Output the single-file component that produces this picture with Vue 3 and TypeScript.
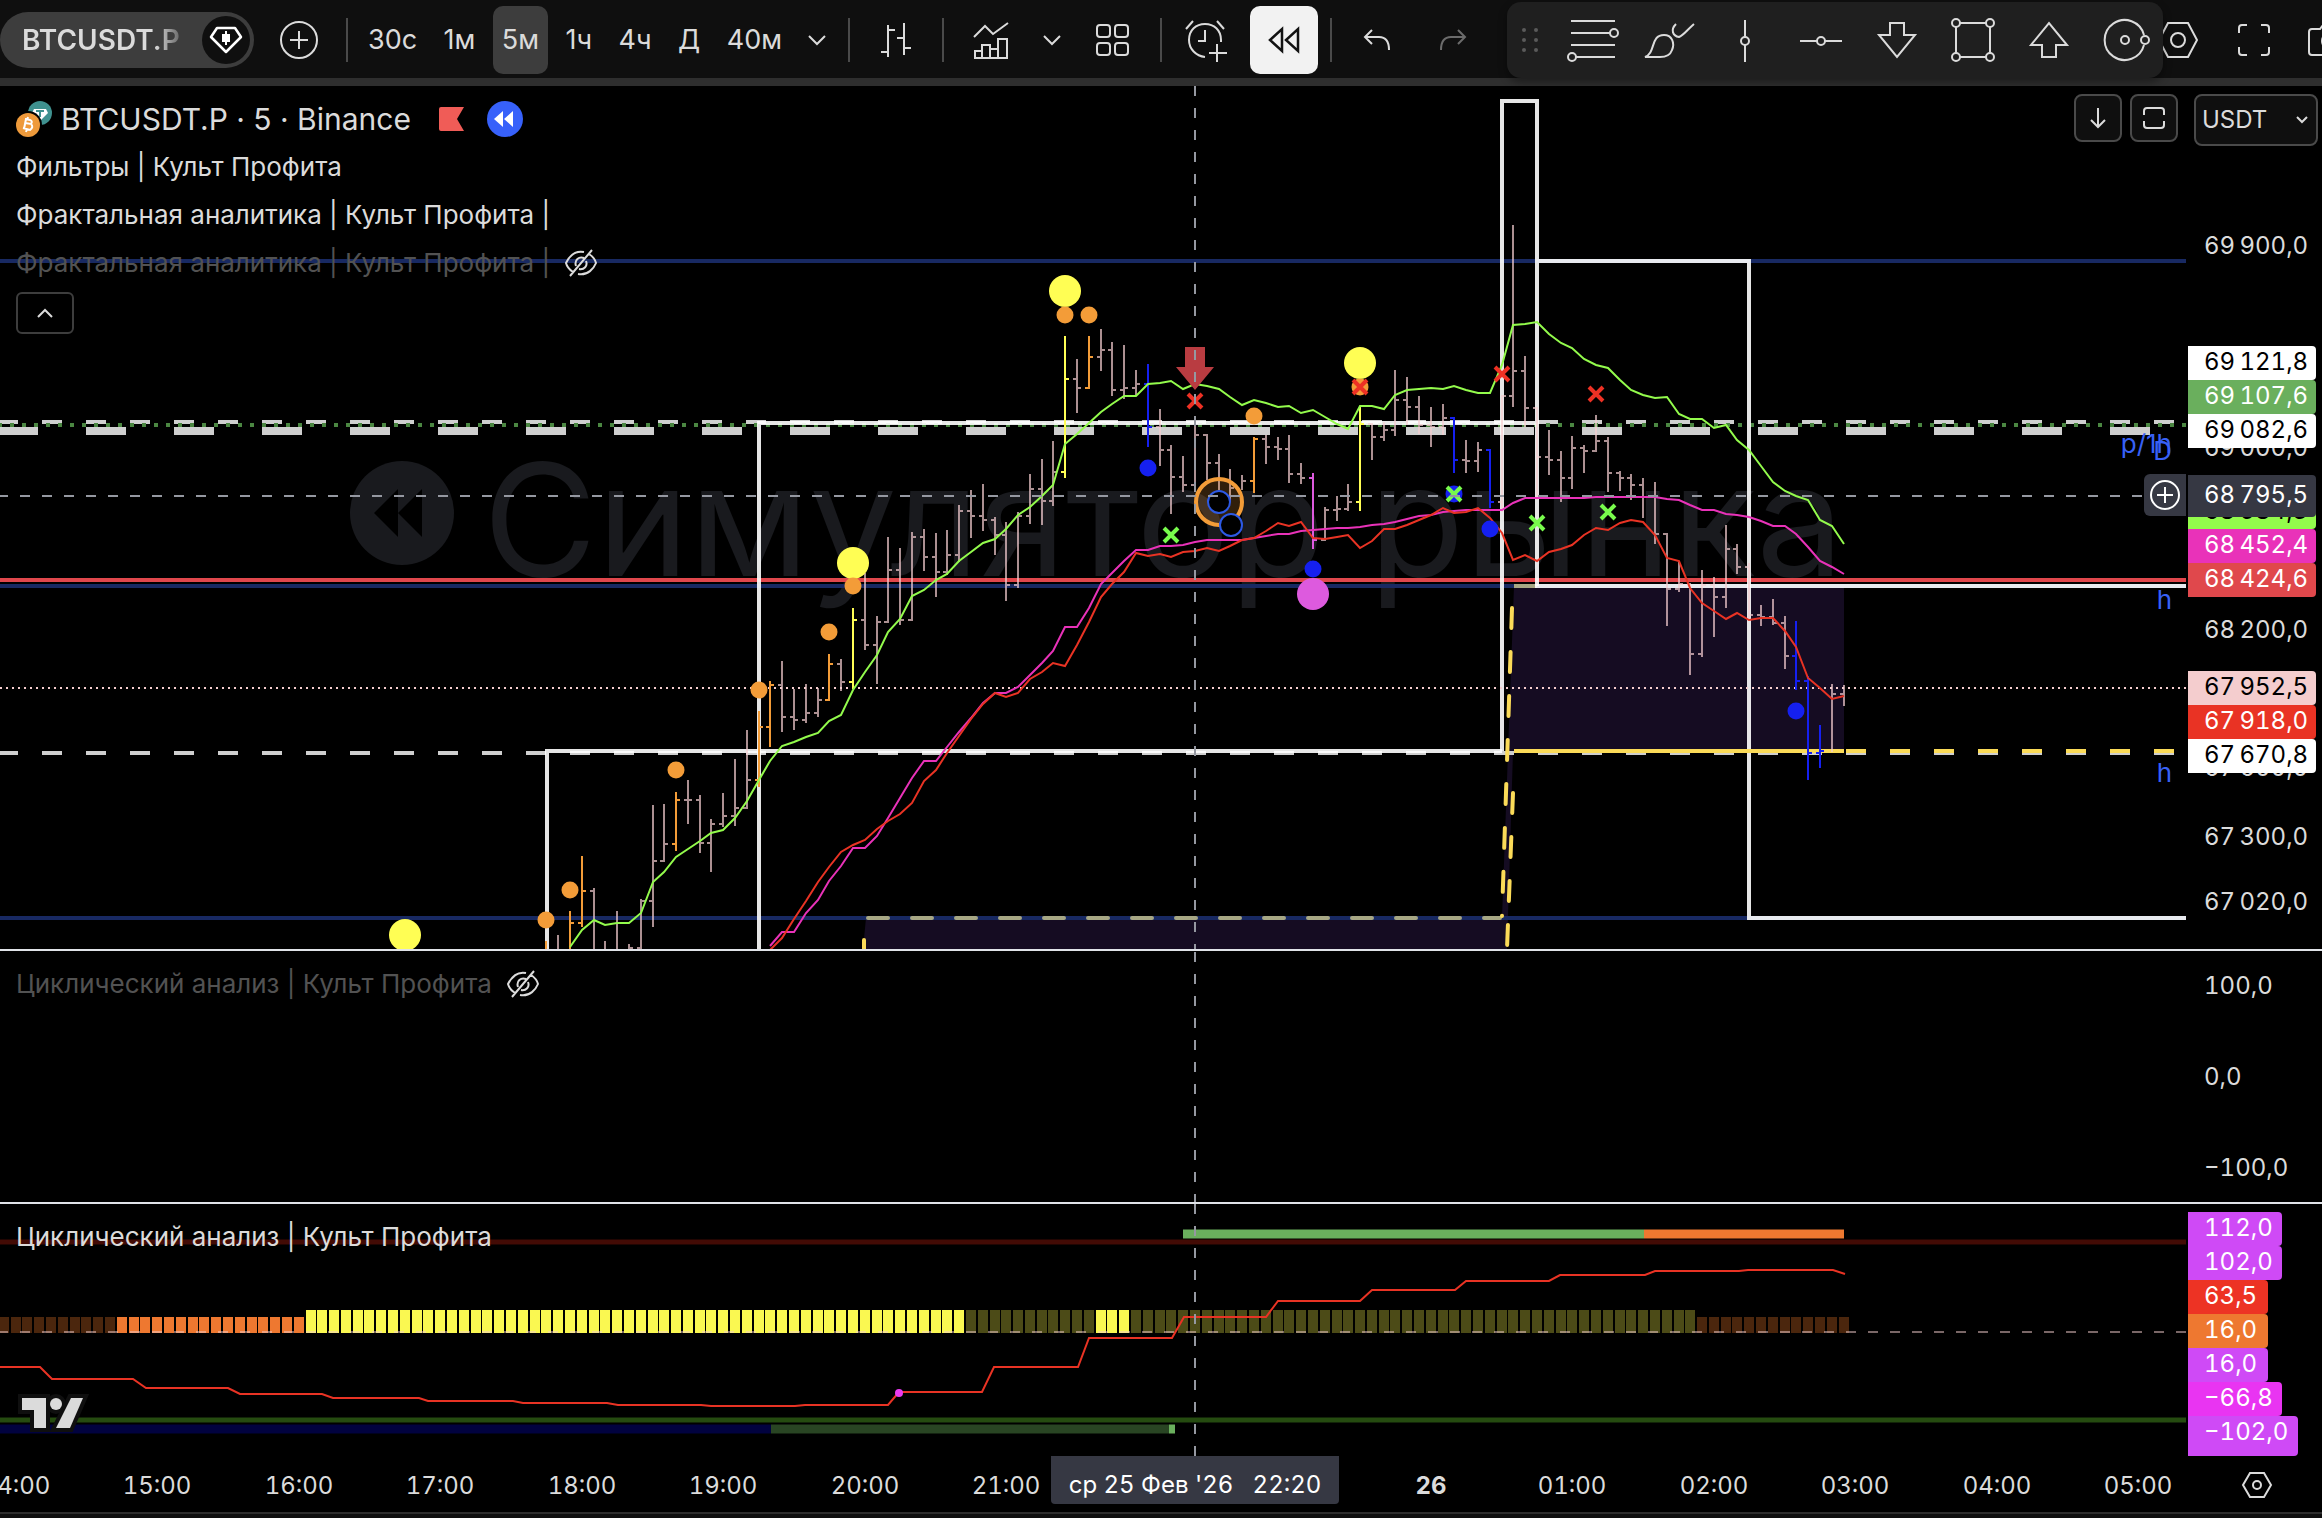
<script setup lang="ts">
import { ref } from 'vue'

interface Tag {
  text: string
  y: number
  bg?: string
  fg?: string
  kind?: string
}

type Bar = [number, number, number, number | null, number | null, string?]
type Point = [number, number]

const currency = ref('USDT')
const activeInterval = ref('5м')
const intervals = ['30с', '1м', '5м', '1ч', '4ч', 'Д', '40м']

// Bars are numbered from the one under the cursor (22:20), five minutes apart.
const CURSOR_X = 1195
const STEP = 11.793
const xOf = (i: number): number => Math.round(CURSOR_X + i * STEP)
const cursorLeft = `${(CURSOR_X / 2186) * 100}%`

// [index, high, low, open, close, colour key]
const bars: Bar[] = [
  [-55, 941, 960, null, null, 'o'], [-54, 935, 960, null, null], [-53, 911, 960, null, 923, 'o'],
  [-52, 856, 927, 923, 891, 'o'], [-51, 888, 960, 891, null], [-50, 941, 960, null, null],
  [-49, 911, 960, null, null], [-48, 944, 960, null, 948], [-47, 899, 960, 948, 901],
  [-46, 805, 927, 901, 861], [-45, 804, 862, 861, 844], [-44, 792, 851, 844, 800, 'o'],
  [-43, 780, 824, 800, 800], [-42, 795, 853, 800, 843], [-41, 819, 872, 843, 824],
  [-40, 793, 827, 824, 816], [-39, 759, 826, 816, 808], [-38, 730, 809, 808, 780],
  [-37, 711, 787, 780, 727, 'o'], [-36, 681, 747, 727, 685, 'o'], [-35, 661, 732, 685, 717],
  [-34, 689, 730, 717, 720], [-33, 684, 723, 720, 713], [-32, 688, 717, 713, 700],
  [-31, 654, 701, 700, 664, 'o'], [-30, 659, 691, 664, 682], [-29, 608, 689, 682, 620, 'y'],
  [-28, 573, 650, 620, 645], [-27, 616, 684, 645, 622], [-26, 537, 623, 622, 570],
  [-25, 548, 625, 570, 620], [-24, 532, 621, 620, 537], [-23, 529, 571, 537, 557],
  [-22, 533, 597, 557, 572], [-21, 530, 575, 572, 555], [-20, 505, 562, 555, 511],
  [-19, 490, 538, 511, 516], [-18, 484, 531, 516, 520], [-17, 517, 555, 520, 535],
  [-16, 522, 601, 535, 585], [-15, 512, 588, 585, 516], [-14, 474, 524, 516, 489],
  [-13, 459, 525, 489, 501], [-12, 441, 506, 501, 472], [-11, 336, 478, 472, 379, 'y'],
  [-10, 359, 413, 379, 388], [-9, 336, 389, 388, 357, 'o'], [-8, 329, 371, 357, 350],
  [-7, 342, 396, 350, 390], [-6, 345, 399, 390, 388], [-5, 370, 396, 388, 384],
  [-4, 364, 447, 384, 427, 'b'], [-3, 409, 466, 427, 450], [-2, 445, 514, 450, 477],
  [-1, 456, 492, 477, 485], [0, 418, 490, 485, 435], [1, 434, 480, 435, 463],
  [2, 454, 490, 463, null], [3, 469, 502, null, 488], [4, 475, 490, null, 481],
  [5, 437, 493, 481, 439, 'o'], [6, 435, 464, 439, 447], [7, 437, 460, 447, 449],
  [8, 435, 483, 449, 474], [9, 463, 484, 474, 478], [10, 473, 549, 478, 540, 'm'],
  [11, 507, 541, 540, 510], [12, 496, 521, 510, 509], [13, 484, 511, 509, 502],
  [14, 406, 511, 502, 424, 'y'], [15, 423, 460, 424, 437], [16, 422, 441, 437, 430],
  [17, 370, 436, 430, 400], [18, 377, 425, 400, 407], [19, 396, 434, 407, 425],
  [20, 407, 447, 425, 427], [21, 404, 435, 427, 418], [22, 417, 473, 418, 460, 'b'],
  [23, 440, 473, 460, 461], [24, 442, 472, 461, 450], [25, 449, 508, 450, 502, 'b'],
  [26, 395, 512, 502, 396], [27, 225, 407, 396, 371], [28, 356, 427, 371, 408],
  [29, 407, 500, 408, 457], [30, 430, 475, 457, 460], [31, 451, 502, 460, 478],
  [32, 436, 489, 478, 448], [33, 445, 473, 448, 451], [34, 415, 452, 451, 441],
  [35, 437, 492, 441, 473], [36, 471, 491, 473, 478], [37, 474, 500, 478, 485],
  [38, 478, 518, 485, 497], [39, 482, 544, 497, 534], [40, 533, 626, 534, 589],
  [41, 562, 592, 589, 584], [42, 583, 675, null, 654], [43, 570, 657, 654, 585],
  [44, 577, 637, 585, 597], [45, 525, 608, 597, 549], [46, 544, 574, 549, 567],
  [47, 563, 618, 567, 615], [48, 605, 626, 615, 617], [49, 599, 625, 617, 623],
  [50, 616, 669, 623, 656], [51, 621, 690, 656, 681, 'b'], [52, 676, 780, 681, 753, 'b'],
  [53, 725, 768, 753, 751, 'b'], [54, 684, 752, null, 694], [55, 685, 706, 694, null],
]

const barColors: Record<string, string> = {
  n: 'rgba(245, 205, 208, 0.7)',
  o: '#f39c38',
  y: '#fffe54',
  b: '#1520f0',
  m: '#dd5ade',
}

const barPaths = Object.entries(barColors).map(([key, color]) => ({
  color,
  d: bars
    .filter((b) => (b[5] ?? 'n') === key)
    .map(([i, high, low, open, close]) => {
      const x = xOf(i)
      let d = `M${x} ${high}V${low}`
      if (open !== null) d += `M${x - 4} ${open}H${x - 1}`
      if (close !== null) d += `M${x + 1} ${close}H${x + 4}`
      return d
    })
    .join(''),
}))

const seq = (start: number, ys: number[]): Point[] => ys.map((y, k) => [start + k, y])
const toPoints = (pts: Point[]): string => pts.map(([i, y]) => `${xOf(i)},${y}`).join(' ')

const greenLine = toPoints([[-53, 947], ...seq(-52, [
  930, 920, 925, 923, 923, 913, 882, 872, 857, 849, 841, 833, 830, 818, 801, 780, 761, 746, 742, 737,
  733, 721, 715, 690, 672, 655, 632, 619, 596, 590, 580, 574, 561, 552, 543, 539, 529, 515, 507, 496,
  485, 444, 434, 423, 412, 404, 396, 396, 384, 383, 381, 389, 384, 386, 389, 397, 405, 400, 403, 407,
  406, 413, 410, 417, 424, 429, 406, 406, 409, 395, 390, 389, 388, 389, 386, 390, 393, 393, 365, 325,
  324, 322, 334, 343, 348, 359, 365, 368, 380, 390, 395, 398, 397, 414, 419, 419, 428, 425, 440, 450,
  466, 482, 491, 496, 500, 520, 526, 544,
])])

const pinkLine = toPoints([[-36, 946], ...seq(-35, [
  932, 932, 913, 900, 881, 866, 848, 848, 836, 818, 798, 778, 761, 761, 747, 732, 718, 703, 693, 693,
  687, 675, 663, 651, 627, 627, 608, 584, 573, 561, 550, 550, 546, 546, 545, 542, 540, 540, 540, 540,
  538, 536, 534, 534, 531, 530, 529, 528, 528, 527, 525, 524, 522, 519, 516, 515, 512, 511, 510, 510,
  510, 510, 503, 498, 498, 498, 498, 498, 498, 497, 497, 497, 497, 497, 497, 499, 500, 505, 510, 510,
  514, 515, 517, 521, 526, 526, 534, 547, 561, 567, 574,
])])

const redLine = toPoints(seq(-36, [
  950, 938, 919, 901, 882, 867, 852, 845, 840, 829, 821, 814, 803, 781, 770, 753, 736, 719, 704, 693,
  697, 693, 679, 672, 663, 666, 645, 622, 597, 584, 572, 553, 556, 554, 557, 552, 551, 548, 551, 546,
  540, 538, 531, 523, 526, 522, 538, 539, 537, 535, 548, 541, 529, 529, 525, 520, 515, 508, 513, 512,
  508, 518, 533, 560, 555, 561, 552, 549, 545, 535, 528, 530, 523, 520, 522, 535, 558, 561, 588, 603,
  611, 619, 613, 620, 618, 618, 631, 647, 678, 688, 699, 696,
]))

const dots: { i: number; y: number; r: number; c: string }[] = [
  { i: -67, y: 935, r: 16, c: '#fffe54' }, { i: -29, y: 563, r: 16, c: '#fffe54' },
  { i: -11, y: 291, r: 16, c: '#fffe54' }, { i: 14, y: 363, r: 16, c: '#fffe54' },
  { i: 10, y: 594, r: 16, c: '#dd5ade' },
  ...([[-55, 920], [-53, 890], [-44, 770], [-37, 690], [-31, 632], [-29, 586], [-11, 315], [-9, 315],
    [5, 416], [14, 387]] as Point[]).map(([i, y]) => ({ i, y, r: 8.5, c: '#f39c38' })),
  ...([[-4, 468], [10, 569], [22, 494], [25, 529], [51, 711]] as Point[])
    .map(([i, y]) => ({ i, y, r: 8.5, c: '#1520f0' })),
]

const crosses: { i: number; y: number; c: string }[] = [
  { i: 0, y: 401, c: '#ee3124' }, { i: 14, y: 387, c: '#ee3124' },
  { i: 26, y: 374, c: '#ee3124' }, { i: 34, y: 394, c: '#ee3124' },
  { i: -2, y: 535, c: '#78fb4c' }, { i: 22, y: 494, c: '#78fb4c' },
  { i: 29, y: 523, c: '#78fb4c' }, { i: 35, y: 512, c: '#78fb4c' },
]

const histogram = Array.from({ length: 157 }, (_, k) => k - 101).map((i) => {
  const low = i < -75 || i > 42
  let fill = '#4c4b17'
  if (i < -91 || i > 42) fill = '#4b260d'
  else if (i < -75) fill = '#ee7830'
  else if (i <= -20 || (i >= -8 && i <= -6)) fill = '#faf851'
  return { x: xOf(i) - 5, y: low ? 1317 : 1310, h: low ? 16 : 23, fill }
})

const cycleLine =
  '0,1367 40,1367 52,1379 133,1379 146,1388 228,1388 240,1394 322,1394 333,1398 419,1398 428,1401 ' +
  '513,1401 523,1403 607,1403 618,1405 701,1405 711,1406 795,1406 805,1405 888,1405 899,1392 982,1392 ' +
  '994,1367 1078,1367 1089,1338 1172,1338 1184,1317 1266,1317 1278,1301 1360,1301 1372,1290 1455,1290 ' +
  '1466,1281 1549,1281 1560,1275 1645,1275 1655,1271 1739,1271 1748,1270 1833,1270 1845,1274'

const priceTags: Tag[] = [
  { text: '69\u202f900,0', y: 247 },
  { text: '69\u202f000,0', y: 449 },
  { text: '68\u202f200,0', y: 631 },
  { text: '67\u202f600,0', y: 769 },
  { text: '67\u202f300,0', y: 838 },
  { text: '67\u202f020,0', y: 903 },
  { text: '69\u202f121,8', y: 363, bg: '#ffffff', fg: '#000' },
  { text: '69\u202f107,6', y: 397, bg: '#6aaf5d', fg: '#fff' },
  { text: '69\u202f082,6', y: 431, bg: '#ffffff', fg: '#000' },
  { text: '68\u202f584,3', y: 512, bg: '#93fb4c', fg: '#000' },
  { text: '68\u202f795,5', y: 496, bg: '#363843', fg: '#fff', kind: 'cursor' },
  { text: '68\u202f452,4', y: 546, bg: '#e932b9', fg: '#fff' },
  { text: '68\u202f424,6', y: 580, bg: '#e0484c', fg: '#fff' },
  { text: '67\u202f952,5', y: 688, bg: '#f4cdce', fg: '#000' },
  { text: '67\u202f918,0', y: 722, bg: '#e93324', fg: '#fff' },
  { text: '67\u202f670,8', y: 756, bg: '#ffffff', fg: '#000' },
]

const midTags: Tag[] = [
  { text: '100,0', y: 987 },
  { text: '0,0', y: 1078 },
  { text: '−100,0', y: 1169 },
]

const cycleTags: Tag[] = [
  { text: '112,0', y: 1229, bg: '#cf4af6', kind: 'm' },
  { text: '102,0', y: 1263, bg: '#cf4af6', kind: 'm' },
  { text: '63,5', y: 1297, bg: '#ed3324', kind: 's' },
  { text: '16,0', y: 1331, bg: '#ee7830', kind: 's' },
  { text: '16,0', y: 1365, bg: '#cf4af6', kind: 's' },
  { text: '−66,8', y: 1399, bg: '#e934f2', kind: 'm' },
  { text: '−102,0', y: 1433, bg: '#cf4af6', kind: 'l' },
]

const times = [
  '14:00', '15:00', '16:00', '17:00', '18:00', '19:00', '20:00', '21:00', '', '', '26', '01:00',
  '02:00', '03:00', '04:00', '05:00',
].map((text, k) => ({ text, left: (xOf(-100 + k * 12) / 2186) * 100 })).filter((t) => t.text)

const topPct = (y: number, from: number, height: number): string => `${((y - from) / height) * 100}%`
</script>

<template>
  <div class="app">
    <header class="toolbar">
      <div class="symbol">
        <button class="symbol-name" type="button">BTCUSDT.P</button>
        <button class="symbol-badge" type="button" aria-label="Тип инструмента">
          <svg width="34" height="28" viewBox="0 0 34 28" fill="none" stroke="#fff" stroke-width="2.5">
            <path d="M8 2H26L32 11L17 26L2 11Z" stroke-linejoin="round" />
            <path d="M17 5V19" stroke-width="2" /><path d="M13 8H21V16H13Z" fill="#fff" stroke="none" />
          </svg>
        </button>
      </div>
      <button class="tool wide" type="button" aria-label="Сравнить">
        <svg width="40" height="40" viewBox="0 0 40 40" class="ln"><circle cx="20" cy="20" r="18" /><path d="M20 11V29M11 20H29" /></svg>
      </button>
      <span class="sep first"></span>
      <nav class="intervals" aria-label="Интервалы">
        <button v-for="v in intervals" :key="v" type="button" class="interval" :class="{ active: v === activeInterval }" @click="activeInterval = v">{{ v }}</button>
      </nav>
      <button class="tool chev" type="button" aria-label="Другие интервалы">
        <svg width="20" height="12" viewBox="0 0 20 12" class="ln"><path d="M2 2L10 10L18 2" /></svg>
      </button>
      <span class="sep s1"></span>
      <button class="tool bars" type="button" aria-label="Бары">
        <svg width="32" height="36" viewBox="0 0 32 36" class="ln"><path d="M8 3V35M1 30H8M8 8H15M24 1V33M17 16H24M24 26H31" /></svg>
      </button>
      <span class="sep"></span>
      <button class="tool ind" type="button" aria-label="Индикаторы">
        <svg width="40" height="40" viewBox="0 0 40 40" class="ln"><path d="M3 17L14 6L22 14L37 3M4 38V31H11V25H19V29H27V19H36V38ZM11 31V38M19 29V38M27 29V38" /></svg>
      </button>
      <button class="tool chev" type="button" aria-label="Избранные индикаторы">
        <svg width="20" height="12" viewBox="0 0 20 12" class="ln"><path d="M2 2L10 10L18 2" /></svg>
      </button>
      <button class="tool grid" type="button" aria-label="Шаблоны">
        <svg width="36" height="36" viewBox="0 0 36 36" class="ln"><rect x="2" y="3" width="13" height="12" rx="3" /><rect x="20" y="3" width="13" height="12" rx="3" /><rect x="2" y="21" width="13" height="12" rx="3" /><rect x="20" y="21" width="13" height="12" rx="3" /></svg>
      </button>
      <span class="sep s2"></span>
      <button class="tool alarm" type="button" aria-label="Оповещение">
        <svg width="44" height="44" viewBox="0 0 44 44" class="ln"><path d="M21 39C12 38 5 31 5 22C5 12 12 6 21 6C30 6 37 12 37 22V24M21 12V23H14M2 11L9 3M33 3L40 11M33 26V44M25 35H43" /></svg>
      </button>
      <button class="replay" type="button" aria-label="Симулятор рынка">
        <svg width="32" height="28" viewBox="0 0 32 28" fill="none" stroke="#131313" stroke-width="2.5"><path d="M14 3V25L2 14ZM30 3V25L18 14Z" /></svg>
      </button>
      <span class="sep s3"></span>
      <button class="tool wide undo" type="button" aria-label="Отменить">
        <svg width="28" height="24" viewBox="0 0 28 24" class="ln"><path d="M9 2L2 9L9 16M2 9H16C23 9 26 14 26 22" /></svg>
      </button>
      <button class="tool wide redo" type="button" aria-label="Повторить">
        <svg width="28" height="24" viewBox="0 0 28 24" class="ln"><path d="M19 2L26 9L19 16M26 9H12C5 9 2 14 2 22" /></svg>
      </button>
      <div class="right-tools">
        <button class="tool wide" type="button" aria-label="Настройки">
          <svg width="42" height="40" viewBox="0 0 42 40" class="ln"><path d="M11 3H31L40 20L31 37H11L2 20Z" /><circle cx="21" cy="20" r="7" /></svg>
        </button>
        <button class="tool wide" type="button" aria-label="Во весь экран">
          <svg width="36" height="36" viewBox="0 0 36 36" class="ln"><path d="M3 11V6Q3 3 6 3H11M25 3H30Q33 3 33 6V11M33 25V30Q33 33 30 33H25M11 33H6Q3 33 3 30V25" /></svg>
        </button>
        <button class="tool wide" type="button" aria-label="Снимок экрана">
          <svg width="46" height="36" viewBox="0 0 46 36" class="ln"><path d="M5 7H13L16 3H30L33 7H41Q44 7 44 10V30Q44 33 41 33H5Q2 33 2 30V10Q2 7 5 7Z" /><circle cx="23" cy="19" r="8" /></svg>
        </button>
      </div>

      <div class="drawings">
        <span class="grip"><i v-for="n in 6" :key="n"></i></span>
        <button class="draw" type="button" aria-label="Уровни">
          <svg width="54" height="46" viewBox="0 0 54 46" class="ln"><path d="M5 4H49M5 16H44M5 28H49M10 40H49" /><circle cx="48" cy="16" r="4" /><circle cx="6" cy="40" r="4" /></svg>
        </button>
        <button class="draw" type="button" aria-label="Кисть">
          <svg width="54" height="46" viewBox="0 0 54 46" class="ln"><path d="M3 40C14 36 8 18 22 18C30 18 33 26 30 33C28 39 23 40 18 40ZM34 7C28 13 31 19 37 20C42 18 45 13 52 7" /></svg>
        </button>
        <button class="draw" type="button" aria-label="Вертикальная линия">
          <svg width="54" height="46" viewBox="0 0 54 46" class="ln"><path d="M27 3V20M27 28V45" /><circle cx="27" cy="24" r="4" /></svg>
        </button>
        <button class="draw" type="button" aria-label="Горизонтальная линия">
          <svg width="54" height="46" viewBox="0 0 54 46" class="ln"><path d="M6 24H23M31 24H48" /><circle cx="27" cy="24" r="4" /></svg>
        </button>
        <button class="draw" type="button" aria-label="Стрелка вниз">
          <svg width="54" height="46" viewBox="0 0 54 46" class="ln"><path d="M20 6H34V18H45L27 40L9 18H20Z" /></svg>
        </button>
        <button class="draw" type="button" aria-label="Прямоугольник">
          <svg width="54" height="46" viewBox="0 0 54 46" class="ln"><path d="M14 6H40M14 40H40M10 10V36M44 10V36" /><circle cx="10" cy="6" r="4" /><circle cx="44" cy="6" r="4" /><circle cx="10" cy="40" r="4" /><circle cx="44" cy="40" r="4" /></svg>
        </button>
        <button class="draw" type="button" aria-label="Стрелка вверх">
          <svg width="54" height="46" viewBox="0 0 54 46" class="ln"><path d="M20 40H34V28H45L27 6L9 28H20Z" /></svg>
        </button>
        <button class="draw" type="button" aria-label="Окружность">
          <svg width="54" height="46" viewBox="0 0 54 46" class="ln"><path d="M46 18A20 20 0 1 0 46 28" /><circle cx="27" cy="23" r="4" /><circle cx="47" cy="23" r="4" /></svg>
        </button>
      </div>
    </header>

    <main class="charts">
      <section class="pane">
        <div class="plot">
          <svg viewBox="0 86 2186 863" class="canvas" fill="none">
            <g fill="#191a1e">
              <circle cx="402" cy="513" r="52" />
              <path d="M398 489V537L374 513ZM422 489V537L398 513Z" fill="#000" />
              <text class="mark" x="483" y="576">Симулятор рынка</text>
            </g>
            <path d="M866 918H1502L1514 586H1844V751H1513L1507 949H863Z" fill="#150c22" />
            <path d="M0 261H2186M0 586H2186M0 918H2186" stroke="#182962" stroke-width="4" />
            <path d="M-2 422H2186" stroke="#cfcfcf" stroke-width="4" stroke-dasharray="20 24" />
            <path d="M-2 431H2186" stroke="#cfcfcf" stroke-width="8" stroke-dasharray="40 48" />
            <path d="M-2 425H2186" stroke="#4b8742" stroke-width="4" stroke-dasharray="4 8" />
            <path d="M-2 753H2186" stroke="#cfcfcf" stroke-width="4" stroke-dasharray="20 24" />
            <path d="M868 918H1500" stroke="#a7a784" stroke-width="4" stroke-dasharray="20 24" stroke-linecap="round" />
            <path d="M1514 586H1537" stroke="#a7a784" stroke-width="4" />
            <path d="M0 580H2186" stroke="#e0474c" stroke-width="4" />
            <g stroke="#fff" stroke-width="4" stroke-opacity="0.9">
              <path d="M547 949V751H1502" /><path d="M759 949V423H1535" />
              <path d="M1502 751V101H1537V586" />
              <path d="M1539 261H1749V918H2186" /><path d="M1535 586H2186" />
            </g>
            <path d="M1512 608L1502 916" stroke="#fbdb58" stroke-width="4" stroke-dasharray="20 24" stroke-linecap="round" />
            <path d="M1513 793L1507 949" stroke="#fbdb58" stroke-width="4" stroke-dasharray="20 24" stroke-linecap="round" />
            <path d="M864 940V949" stroke="#fbdb58" stroke-width="4" stroke-linecap="round" />
            <path d="M1514 751H1844" stroke="#fbdb58" stroke-width="4" />
            <path d="M1846 751H2186" stroke="#fbdb58" stroke-width="4" stroke-dasharray="20 24" />
            <path d="M0 688H2186" stroke="#f4cdce" stroke-width="2" stroke-dasharray="2 4" />
            <path v-for="p in barPaths" :key="p.color" :d="p.d" :stroke="p.color" stroke-width="2" />
            <polyline :points="greenLine" stroke="#93fb4c" stroke-width="2" />
            <polyline :points="pinkLine" stroke="#e932b9" stroke-width="2" />
            <polyline :points="redLine" stroke="#e93324" stroke-width="2" />
            <path d="M1185 347H1205V367H1214L1195 390L1176 367H1185Z" fill="#b93c41" />
            <circle v-for="(d, k) in dots" :key="k" :cx="xOf(d.i)" :cy="d.y" :r="d.r" :fill="d.c" />
            <path v-for="(c, k) in crosses" :key="k" :d="`M${xOf(c.i) - 7} ${c.y - 7}l14 14m0 -14l-14 14`" :stroke="c.c" stroke-width="4" />
            <circle cx="1219" cy="502" r="23" fill="rgba(243,156,56,0.2)" stroke="#f39c38" stroke-width="4" />
            <circle cx="1219" cy="502" r="11" fill="#000" stroke="#2d59e4" stroke-width="2" />
            <circle cx="1231" cy="525" r="11" fill="#000" stroke="#2d59e4" stroke-width="2" />
            <path d="M-2 496H2142" stroke="#9598a1" stroke-width="2" stroke-dasharray="10 12" />
            <path d="M1195 86V949" stroke="#9598a1" stroke-width="2" stroke-dasharray="10 12" />
            <g class="levels">
              <text x="2172" y="453">p/1h</text><text x="2172" y="460">D</text>
              <text x="2172" y="609">h</text><text x="2172" y="782">h</text>
            </g>
          </svg>

          <div class="legend">
            <div class="legend-title">
              <svg width="38" height="38" viewBox="0 0 38 38">
                <circle cx="24" cy="13" r="12" fill="#3f918f" />
                <path d="M18 9H30L32 13L24 21L16 13Z" fill="#fff" /><path d="M20 11H28M24 11V17" stroke="#3f918f" stroke-width="2" />
                <circle cx="12" cy="25" r="14" fill="#000" /><circle cx="12" cy="25" r="12" fill="#ee9a3b" />
                <path d="M9 19L14 20Q17 21 15 24L9 23M15 24Q18 27 14 30L7 28M10 19L8 29M12 17L11 20M11 29L10 32" fill="none" stroke="#fff" stroke-width="2" />
              </svg>
              <h1>BTCUSDT.P · 5 · Binance</h1>
              <svg class="flag" width="25" height="24" viewBox="0 0 25 24"><path d="M2 0H25L18 12L25 24H2Q0 24 0 22V2Q0 0 2 0Z" fill="#f05c57" /></svg>
              <svg class="rew" width="36" height="36" viewBox="0 0 36 36"><circle cx="18" cy="18" r="18" fill="#3761fa" /><path d="M16 10V26L7 18ZM26 10V26L17 18Z" fill="#fff" /></svg>
            </div>
            <div class="row">Фильтры | Культ Профита</div>
            <div class="row">Фрактальная аналитика | Культ Профита |</div>
            <div class="row dim">
              <span>Фрактальная аналитика | Культ Профита |</span>
              <svg width="34" height="28" viewBox="0 0 34 28" class="ln eye"><path d="M20 3C10 1 5 8 2 14C3 18 6 21 9 23M14 25C24 27 30 19 32 14C31 10 28 7 25 5M20 9C15 7 10 11 12 17M15 20C20 21 24 17 22 12M28 1L6 27" /></svg>
            </div>
            <button class="collapse" type="button" aria-label="Свернуть">
              <svg width="20" height="12" viewBox="0 0 20 12" class="ln"><path d="M3 10L10 3L17 10" /></svg>
            </button>
          </div>

          <div class="corner">
            <button type="button" aria-label="Вниз"><svg width="20" height="24" viewBox="0 0 20 24" class="ln"><path d="M10 2V21M3 14L10 21L17 14" /></svg></button>
            <button type="button" aria-label="Развернуть"><svg width="24" height="24" viewBox="0 0 24 24" class="ln"><path d="M2 9V5Q2 2 5 2H19Q22 2 22 5V9M22 15V19Q22 22 19 22H5Q2 22 2 19V15" /></svg></button>
          </div>
          <button class="add" type="button" aria-label="Добавить">
            <svg width="34" height="34" viewBox="0 0 34 34" fill="none" stroke="#fff" stroke-width="2"><circle cx="17" cy="17" r="14" /><path d="M17 9V25M9 17H25" /></svg>
          </button>
        </div>
        <aside class="axis">
          <span v-for="(t, k) in priceTags" :key="k" class="tag" :class="t.kind" :style="{ top: topPct(t.y, 86, 863), background: t.bg, color: t.fg }">{{ t.text }}</span>
          <div class="currency">
            <select v-model="currency" aria-label="Валюта"><option>USDT</option><option>USD</option></select>
            <svg width="14" height="10" viewBox="0 0 14 10" class="ln"><path d="M2 2L7 7L12 2" /></svg>
          </div>
        </aside>
      </section>

      <section class="pane">
        <div class="plot">
          <svg viewBox="0 951 2186 251" class="canvas"><path d="M1195 952V1202" stroke="#9598a1" stroke-width="2" stroke-dasharray="10 12" /></svg>
          <div class="legend small">
            <div class="row dim">
              <span>Циклический анализ | Культ Профита</span>
              <svg width="34" height="28" viewBox="0 0 34 28" class="ln eye"><path d="M20 3C10 1 5 8 2 14C3 18 6 21 9 23M14 25C24 27 30 19 32 14C31 10 28 7 25 5M20 9C15 7 10 11 12 17M15 20C20 21 24 17 22 12M28 1L6 27" /></svg>
            </div>
          </div>
        </div>
        <aside class="axis">
          <span v-for="t in midTags" :key="t.text" class="tag" :style="{ top: topPct(t.y, 951, 251) }">{{ t.text }}</span>
        </aside>
      </section>

      <section class="pane last">
        <div class="plot">
          <svg viewBox="0 1204 2186 252" class="canvas" fill="none">
            <path d="M1183 1234H1644" stroke="#6aaf5d" stroke-width="9" />
            <path d="M1644 1234H1844" stroke="#ee7830" stroke-width="9" />
            <path d="M0 1242H2186" stroke="#430b05" stroke-width="5" />
            <rect v-for="b in histogram" :key="b.x" :x="b.x" :y="b.y" width="10" :height="b.h" :fill="b.fill" />
            <path d="M-2 1332H2186" stroke="rgba(244,205,206,0.5)" stroke-width="2" stroke-dasharray="10 12" />
            <path d="M0 1420H2186" stroke="#254b10" stroke-width="5" />
            <path d="M0 1429H771" stroke="#01023f" stroke-width="9" />
            <path d="M771 1429H1169" stroke="#294523" stroke-width="9" />
            <path d="M1169 1429H1175" stroke="#6aaf5d" stroke-width="9" />
            <polyline :points="cycleLine" stroke="#e93324" stroke-width="2" />
            <circle cx="899" cy="1393" r="4" fill="#e93bf0" />
            <path d="M1195 1204V1456" stroke="#9598a1" stroke-width="2" stroke-dasharray="10 12" />
            <g fill="#dbdbdb" stroke="#0f0f0f" stroke-width="8" paint-order="stroke">
              <path d="M22 1398H46V1428H34V1410H22Z" /><path d="M71 1398H83L70 1428H56Z" /><circle cx="56" cy="1404" r="6" />
            </g>
            <path d="M22 1398H46V1428H34V1410H22Z" fill="#dbdbdb" />
          </svg>
          <div class="legend small"><div class="row">Циклический анализ | Культ Профита</div></div>
        </div>
        <aside class="axis">
          <span v-for="(t, k) in cycleTags" :key="k" class="tag filled" :class="t.kind" :style="{ top: topPct(t.y, 1204, 252), background: t.bg }">{{ t.text }}</span>
        </aside>
      </section>

      <footer class="time-row">
        <div class="times">
          <span v-for="t in times" :key="t.text" class="time" :class="{ day: t.text === '26' }" :style="{ left: t.left + '%' }">{{ t.text }}</span>
          <span class="time-cursor" :style="{ left: cursorLeft }">ср 25 Фев '26&nbsp;&nbsp; 22:20</span>
        </div>
        <button class="time-settings" type="button" aria-label="Настройки шкалы">
          <svg width="32" height="30" viewBox="0 0 32 30" class="ln"><path d="M9 3H23L30 15L23 27H9L2 15Z" /><circle cx="16" cy="15" r="4" /></svg>
        </button>
      </footer>
    </main>
  </div>
</template>

<style>
body {
  background: #0f0f0f;
  overflow-x: hidden;
}
</style>

<style scoped>
.app {
  font-family: Inter, 'Noto Sans', sans-serif;
  font-size: 24px;
  line-height: 32px;
  color: #dbdbdb;
  overflow: hidden;
}
.app * {
  box-sizing: border-box;
}
button,
select {
  font: inherit;
  color: inherit;
  background: none;
  border: 0;
  padding: 0;
  margin: 0;
}
button {
  display: flex;
  align-items: center;
  justify-content: center;
  flex: none;
}
svg {
  display: block;
  flex: none;
}
.ln {
  fill: none;
  stroke: #dbdbdb;
  stroke-width: 2;
}
.toolbar {
  position: relative;
  display: flex;
  align-items: center;
  height: 86px;
  padding-top: 2px;
  background: #0f0f0f;
  border-bottom: 8px solid #2e2e2e;
  white-space: nowrap;
}
.symbol {
  display: flex;
  align-items: center;
  justify-content: space-between;
  flex: none;
  width: 254px;
  height: 56px;
  margin-right: 7px;
  padding: 0 4px 0 22px;
  border-radius: 28px;
  background: #3d3d3d;
}
.symbol-name {
  font-weight: 600;
  font-size: 28px;
  background: linear-gradient(90deg, #dbdbdb 84%, #6a6a6a 100%);
  background-clip: text;
  color: transparent;
}
.symbol-badge {
  width: 48px;
  height: 48px;
  border-radius: 24px;
  background: #0f0f0f;
}
.tool {
  height: 68px;
}
.wide {
  width: 76px;
}
.sep {
  flex: none;
  width: 2px;
  height: 44px;
  background: #4a4a4a;
}
.first {
  margin-left: 9px;
}
.intervals {
  display: flex;
  justify-content: space-between;
  flex: none;
  width: 432px;
  margin-left: 11px;
}
.interval {
  height: 68px;
  padding: 0 9px;
  border-radius: 10px;
  font-size: 27px;
}
.active {
  background: #3d3d3d;
}
.chev {
  width: 52px;
}
.s1 {
  margin-left: 5px;
}
.bars {
  width: 92px;
}
.ind {
  width: 82px;
  padding-left: 12px;
}
.grid {
  width: 70px;
}
.s2 {
  margin-left: 12px;
}
.alarm {
  width: 88px;
}
.replay {
  width: 68px;
  height: 68px;
  border-radius: 10px;
  background: #f2f2f2;
}
.s3 {
  margin-left: 12px;
}
.undo {
  margin-left: 7px;
}
.redo {
  opacity: 0.45;
}
.right-tools {
  display: flex;
  margin-left: auto;
  margin-right: -46px;
}
.drawings {
  position: absolute;
  top: 2px;
  right: 159px;
  display: flex;
  align-items: center;
  width: 656px;
  height: 76px;
  padding-left: 15px;
  border-radius: 14px;
  background: #1f1f1f;
  box-shadow: 0 4px 8px rgba(0, 0, 0, 0.4);
}
.grip {
  display: grid;
  grid-template-columns: 4px 4px;
  gap: 6px 8px;
  margin-right: 17px;
}
.grip i {
  width: 4px;
  height: 4px;
  border-radius: 2px;
  background: #5a5a5a;
}
.draw {
  width: 76px;
  height: 68px;
}
.charts {
  background: #000;
  border-bottom: 2px solid #2e2e2e;
  margin-bottom: 4px;
}
.pane {
  display: flex;
  border-bottom: 2px solid #e0e3e8;
}
.last {
  border-bottom: 0;
}
.plot {
  position: relative;
  flex: 1;
  min-width: 0;
}
.canvas {
  width: 100%;
  height: auto;
}
.mark {
  font-size: 156px;
  fill: #191a1e;
}
.levels text {
  fill: #3861f6;
  font-size: 26px;
  text-anchor: end;
}
.legend {
  position: absolute;
  top: 9px;
  left: 16px;
  font-size: 26px;
}
.legend-title {
  display: flex;
  align-items: center;
  height: 48px;
}
h1 {
  margin: 0 0 0 7px;
  font-size: 30px;
  font-weight: 400;
}
.flag {
  margin-left: 28px;
}
.rew {
  margin-left: 23px;
}
.row {
  display: flex;
  align-items: center;
  height: 48px;
}
.dim {
  color: #525252;
}
.eye {
  margin-left: 14px;
}
.collapse {
  width: 58px;
  height: 42px;
  margin-top: 5px;
  border: 2px solid #3d3d3d;
  border-radius: 6px;
}
.corner {
  position: absolute;
  top: 8px;
  right: 8px;
  display: flex;
  gap: 8px;
}
.corner button,
.currency {
  width: 48px;
  height: 48px;
  border: 2px solid #4a4a4a;
  border-radius: 8px;
  background: #0f0f0f;
}
.add {
  position: absolute;
  right: 0;
  top: 45%;
  width: 42px;
  height: 42px;
  border-radius: 6px 0 0 6px;
  background: #363843;
}
.axis {
  position: relative;
  flex: none;
  width: 136px;
  font-variant-numeric: tabular-nums;
}
.tag {
  position: absolute;
  left: 2px;
  width: 128px;
  height: 34px;
  margin-top: -17px;
  padding-left: 16px;
  border-radius: 0 4px 4px 0;
}
.cursor {
  height: 42px;
  margin-top: -21px;
  padding-top: 4px;
}
.filled {
  color: #fff;
}
.s {
  width: 80px;
}
.m {
  width: 94px;
}
.l {
  width: 110px;
  height: 40px;
}
.currency {
  position: absolute;
  top: 8px;
  right: 4px;
  display: flex;
  align-items: center;
  width: 124px;
  height: 52px;
}
.currency select {
  appearance: none;
  width: 100%;
  height: 48px;
  padding-left: 6px;
}
.currency svg {
  position: absolute;
  right: 7px;
  pointer-events: none;
}
.time-row {
  display: flex;
  height: 56px;
}
.times {
  position: relative;
  flex: 1;
  overflow: hidden;
  font-variant-numeric: tabular-nums;
}
.time {
  position: absolute;
  top: 14px;
  width: 80px;
  margin-left: -40px;
  text-align: center;
}
.day {
  font-weight: 700;
}
.time-cursor {
  position: absolute;
  top: 0;
  width: 288px;
  height: 48px;
  margin-left: -144px;
  padding-top: 13px;
  border-radius: 0 0 4px 4px;
  background: #363843;
  color: #fff;
  text-align: center;
  white-space: nowrap;
}
.time-settings {
  width: 136px;
  height: 58px;
  padding-left: 6px;
}
</style>
